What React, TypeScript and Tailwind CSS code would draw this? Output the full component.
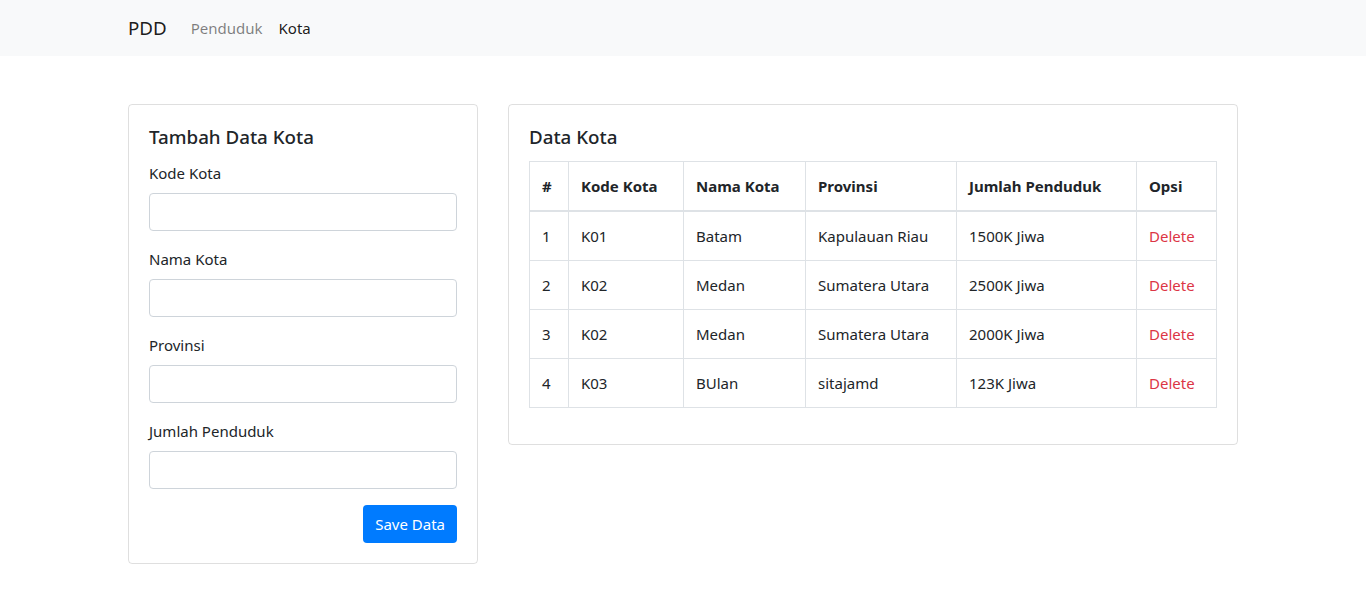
import React from 'react';

const font = "font-['Noto_Sans','Open_Sans',sans-serif]";

const rows = [
  { no: 1, kode: 'K01', nama: 'Batam', prov: 'Kapulauan Riau', jumlah: '1500K Jiwa' },
  { no: 2, kode: 'K02', nama: 'Medan', prov: 'Sumatera Utara', jumlah: '2500K Jiwa' },
  { no: 3, kode: 'K02', nama: 'Medan', prov: 'Sumatera Utara', jumlah: '2000K Jiwa' },
  { no: 4, kode: 'K03', nama: 'BUlan', prov: 'sitajamd', jumlah: '123K Jiwa' },
];

const fields = ['Kode Kota', 'Nama Kota', 'Provinsi', 'Jumlah Penduduk'];

const Field: React.FC<{ label: string }> = ({ label }) => (
  <div className="mb-4">
    <label className="block mb-2 leading-6">{label}</label>
    <input
      type="text"
      className="block w-full h-[38px] px-3 border border-[#ced4da] rounded bg-white outline-none"
    />
  </div>
);

export default function App() {
  return (
    <div className={`${font} min-h-[612px] bg-white text-[#212529] text-[15px] leading-6`}>
      {/* Navbar */}
      <nav className="bg-[#f8f9fa] h-14">
        <div className="max-w-[1140px] mx-auto px-[15px] h-full flex items-center">
          <a className="text-[18.75px] leading-[30px] mr-4 text-[#000000e6]">PDD</a>
          <a className="px-2 text-[#00000080]">Penduduk</a>
          <a className="px-2 text-[#000000e6]">Kota</a>
        </div>
      </nav>

      {/* Content */}
      <div className="max-w-[1140px] mx-auto px-[15px] mt-12">
        <div className="flex gap-[30px] items-start">
          <div className="w-[350px] shrink-0 border border-[#00000020] rounded p-5">
            <h5 className="text-[18.75px] font-medium leading-[24px] mb-3">Tambah Data Kota</h5>
            {fields.map((f) => (
              <Field key={f} label={f} />
            ))}
            <div className="flex justify-end">
              <button className="h-[38px] px-3 rounded bg-[#007bff] text-white">Save Data</button>
            </div>
          </div>

          <div className="flex-1 border border-[#00000020] rounded p-5">
            <h5 className="text-[18.75px] font-medium leading-[24px] mb-3">Data Kota</h5>
            <table className="w-full border-collapse border border-[#dee2e6] mb-4 table-fixed">
              <thead>
                <tr className="text-left">
                  <th className="w-[39px] p-3 border border-[#dee2e6] border-b-2 font-bold">#</th>
                  <th className="w-[115px] p-3 border border-[#dee2e6] border-b-2 font-bold">Kode Kota</th>
                  <th className="w-[122px] p-3 border border-[#dee2e6] border-b-2 font-bold">Nama Kota</th>
                  <th className="w-[151px] p-3 border border-[#dee2e6] border-b-2 font-bold">Provinsi</th>
                  <th className="w-[180px] p-3 border border-[#dee2e6] border-b-2 font-bold">Jumlah Penduduk</th>
                  <th className="p-3 border border-[#dee2e6] border-b-2 font-bold">Opsi</th>
                </tr>
              </thead>
              <tbody>
                {rows.map((r) => (
                  <tr key={r.no}>
                    <td className="p-3 border border-[#dee2e6]">{r.no}</td>
                    <td className="p-3 border border-[#dee2e6]">{r.kode}</td>
                    <td className="p-3 border border-[#dee2e6]">{r.nama}</td>
                    <td className="p-3 border border-[#dee2e6] whitespace-nowrap">{r.prov}</td>
                    <td className="p-3 border border-[#dee2e6]">{r.jumlah}</td>
                    <td className="p-3 border border-[#dee2e6]">
                      <a className="text-[#dc3545]">Delete</a>
                    </td>
                  </tr>
                ))}
              </tbody>
            </table>
          </div>
        </div>
      </div>
    </div>
  );
}
